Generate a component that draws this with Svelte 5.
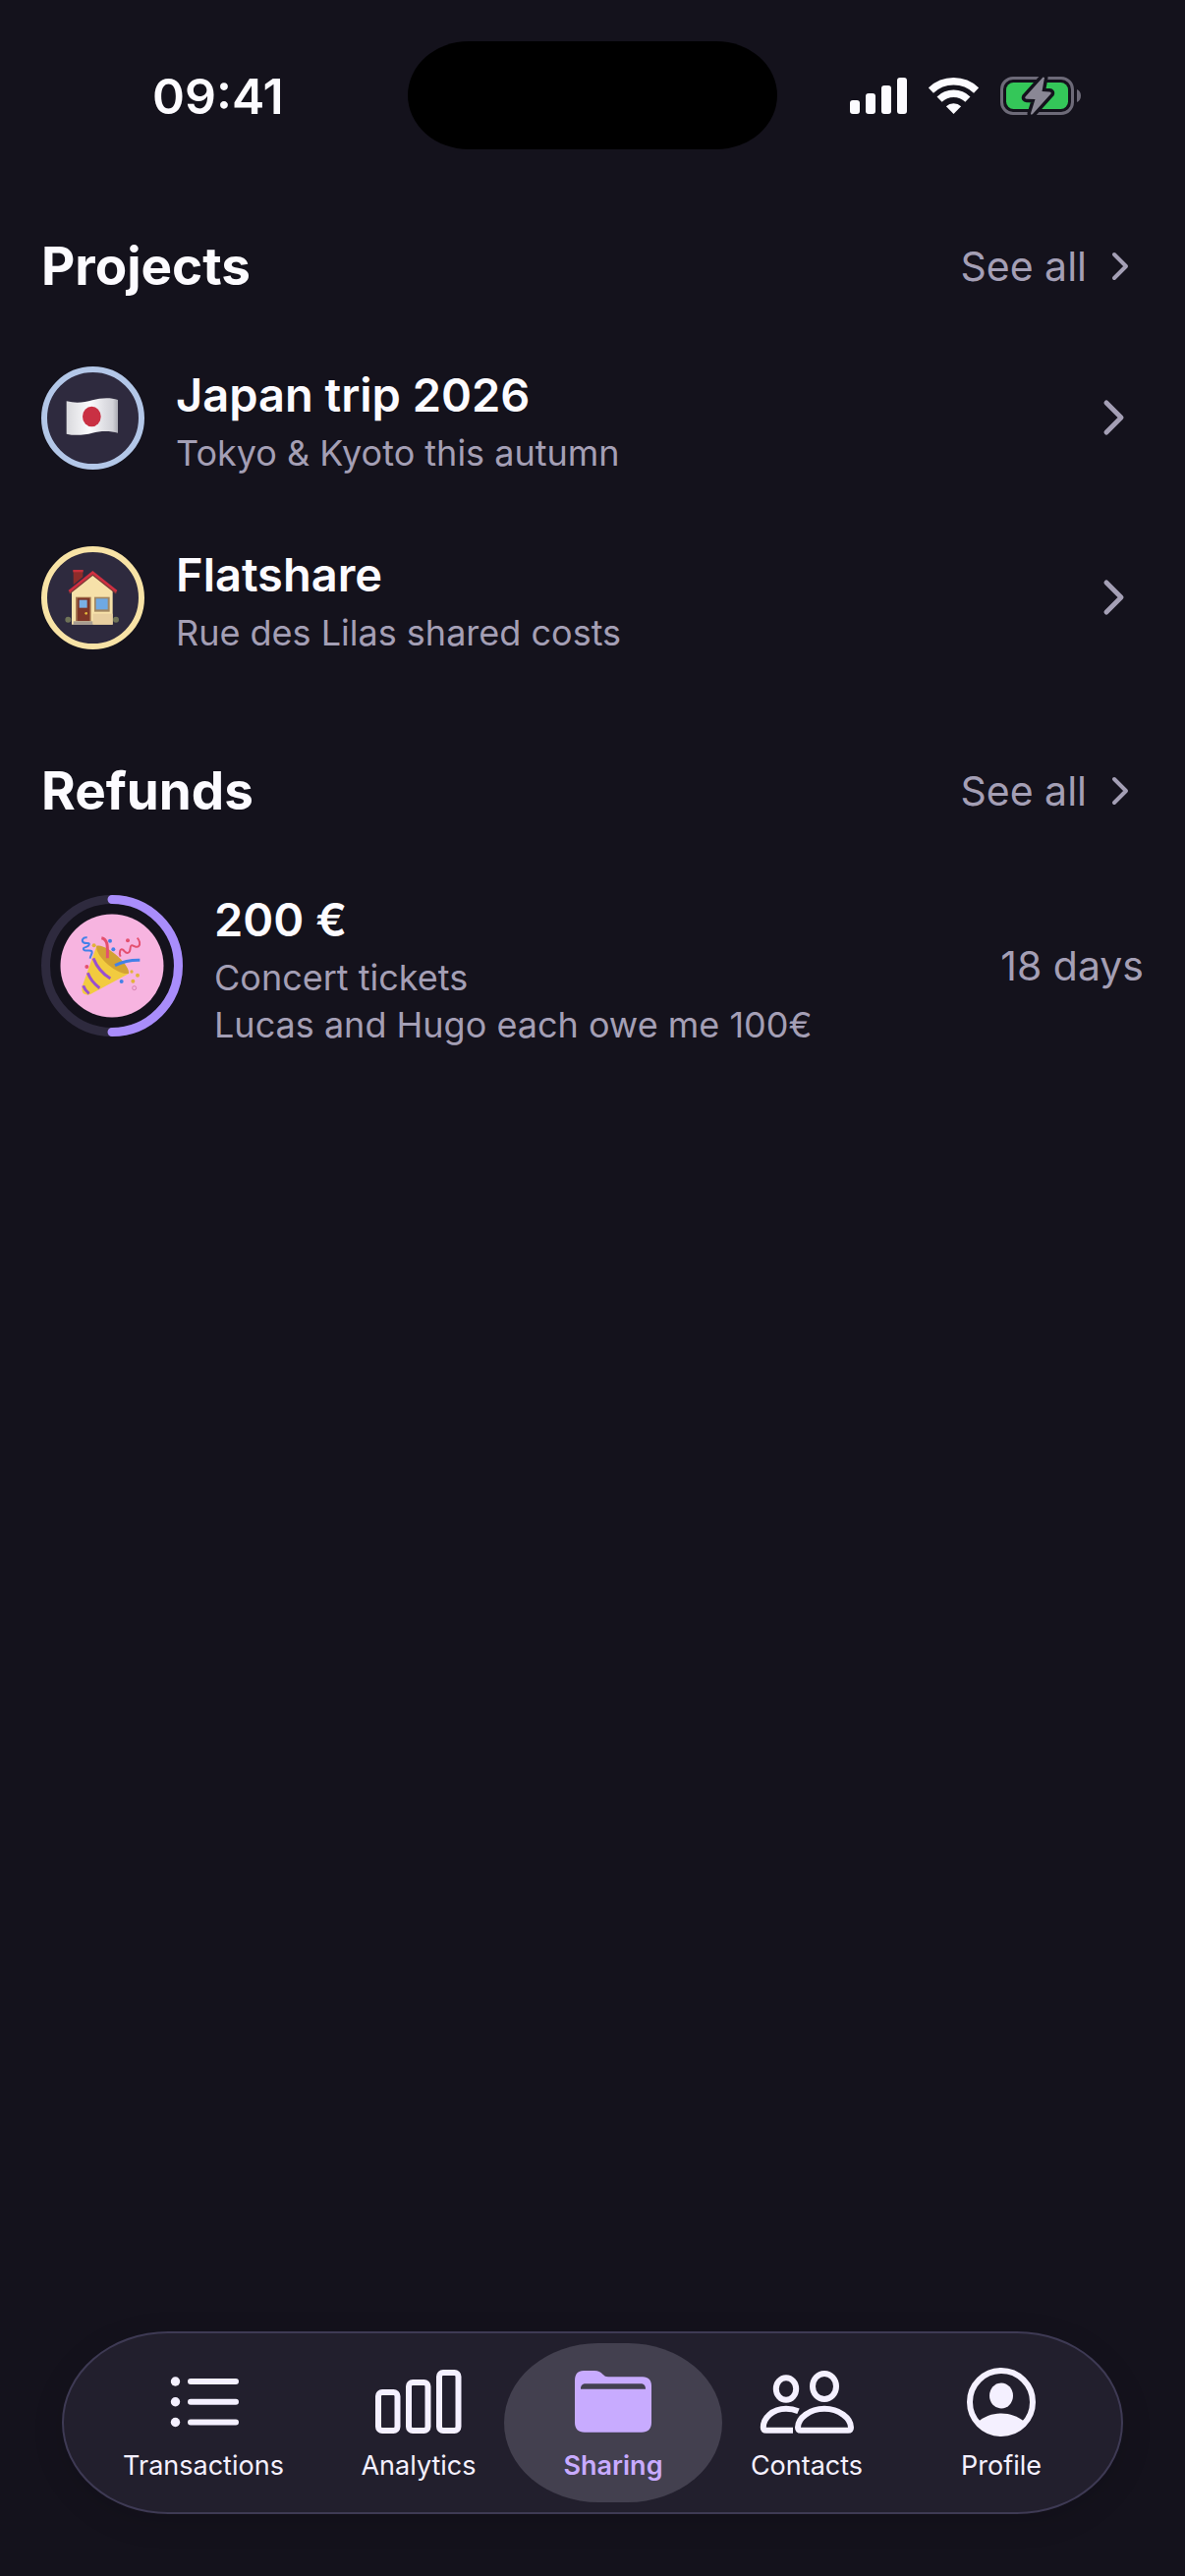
<script lang="ts">
  type Project = {
    name: string;
    note: string;
    icon: "flag" | "house";
    color: string;
  };

  type Refund = {
    amount: string;
    title: string;
    detail: string;
    due: string;
    progress: number;
  };

  const projects: Project[] = [
    { name: "Japan trip 2026", note: "Tokyo & Kyoto this autumn", icon: "flag", color: "#b3c7e8" },
    { name: "Flatshare", note: "Rue des Lilas shared costs", icon: "house", color: "#f8e3a6" },
  ];

  const refunds: Refund[] = [
    {
      amount: "200 €",
      title: "Concert tickets",
      detail: "Lucas and Hugo each owe me 100€",
      due: "18 days",
      progress: 50,
    },
  ];

  const tabs = [
    { id: "transactions", label: "Transactions", grow: 264 },
    { id: "analytics", label: "Analytics", grow: 174 },
    { id: "sharing", label: "Sharing", grow: 222 },
    { id: "contacts", label: "Contacts", grow: 172 },
    { id: "profile", label: "Profile", grow: 224 },
  ];

  let activeTab = $state("sharing");
</script>

{#snippet header(title: string)}
  <header class="section-header">
    <h2>{title}</h2>
    <a class="see-all" href="#{title.toLowerCase()}">
      See all
      <svg width="48" height="48" viewBox="0 0 48 48" aria-hidden="true">
        <path d="M18 12l12 12-12 12" />
      </svg>
    </a>
  </header>
{/snippet}

<div class="screen">
  <div class="status-bar">
    <span class="time">09:41</span>
    <div class="island"></div>
    <div class="status-icons">
      <svg width="58" height="38" viewBox="0 0 58 38" fill="#fcfbff" aria-label="Signal">
        <rect x="0" y="24" width="10" height="14" rx="3" />
        <rect x="16" y="17" width="10" height="21" rx="3" />
        <rect x="32" y="9" width="10" height="29" rx="3" />
        <rect x="48" y="1" width="10" height="37" rx="3" />
      </svg>
      <svg width="51" height="38" viewBox="0 0 51 38" aria-label="Wi-Fi">
        <g fill="none" stroke="#fcfbff" stroke-width="7.4">
          <path d="M2.4 14.100a33.3 33.3 0 0 1 46.2 0" />
          <path d="M11.1 23.100a20.7 20.7 0 0 1 28.8 0" />
        </g>
        <path d="M25.5 38l-7.6-7.7a11 11 0 0 1 15.2 0z" fill="#fcfbff" />
      </svg>
      <svg width="82" height="42" viewBox="0 0 82 42" aria-label="Battery charging">
        <rect x="1.5" y="3.5" width="72" height="36" rx="11.5" fill="none" stroke="#6d6a78" stroke-width="3" />
        <rect x="6" y="8" width="63" height="27" rx="7.5" fill="#34c759" />
        <path d="M78 15c2.600 1 4 3.200 4 6.500s-1.400 5.500-4 6.500z" fill="#6d6a78" />
        <path
          class="bolt-gap"
          d="M43.500 2.500L25.500 22.500q-1 2 1.500 2.200l8.500.3-4.500 14.500q0 2 2 .5L51.500 19.500q.8-1.800-1.500-2l-7.500-.5 2.500-14z"
        />
        <path
          d="M43.500 2.500L25.500 22.500q-1 2 1.500 2.200l8.500.3-4.500 14.500q0 2 2 .5L51.500 19.500q.8-1.800-1.500-2l-7.500-.5 2.500-14z"
          fill="#8a8795"
        />
      </svg>
    </div>
  </div>

  <main>
    <section>
      {@render header("Projects")}
      <ul>
        {#each projects as project (project.name)}
          <li>
            <button class="row" type="button">
              <span class="avatar" style="border-color: {project.color}">
                {#if project.icon === "flag"}
                  <svg width="60" height="60" viewBox="73 76 180 180" aria-hidden="true">
                    <defs>
                      <linearGradient id="cloth">
                        <stop offset="0" stop-color="#d9d9dd" />
                        <stop offset="0.450" stop-color="#fbfbfd" />
                        <stop offset="0.750" stop-color="#dedee3" />
                        <stop offset="0.900" stop-color="#d2d2d8" />
                        <stop offset="1" stop-color="#aaaab2" />
                      </linearGradient>
                    </defs>
                    <path
                      d="M81 116c29 7 54 4 79-3s55-9 78-1v101c-23-7-53-7-78 0s-55 9-79 3z"
                      fill="url(#cloth)"
                    />
                    <ellipse cx="158" cy="163" rx="28" ry="31" fill="#c93043" />
                  </svg>
                {:else}
                  <svg width="60" height="60" viewBox="73 115 180 180" aria-hidden="true">
                    <path d="M102 121h29v22l-29 24z" fill="#8d2c2a" />
                    <path d="M101 121h31v7h-31z" fill="#c62f3a" />
                    <circle cx="86" cy="273" r="9" fill="#6f7358" />
                    <circle cx="232" cy="273" r="9" fill="#6f7358" />
                    <path d="M97 184l63-50 62 50v104h-125z" fill="#f6e1a9" />
                    <path d="M162 255h60v33h-60z" fill="#e8cfa0" />
                    <path d="M90 192l71-57 72 57" fill="none" stroke="#7b3a35" stroke-width="6" />
                    <path d="M89 187l72-58 73 58" fill="none" stroke="#cf2f41" stroke-width="8" />
                    <path d="M109 204h47v74h-47z" fill="#a77b52" />
                    <path d="M114 207h38v70h-38z" fill="#7e3627" />
                    <path d="M120 213h24v24h-24z" fill="#79b0e4" />
                    <circle cx="141" cy="254" r="4" fill="#e5b93c" />
                    <path d="M166 204h47v45h-47z" fill="#a28761" />
                    <path d="M171 209h36v33h-36z" fill="#6fa9e3" />
                    <path d="M102 278h59v11h-59z" fill="#a79c91" />
                  </svg>
                {/if}
              </span>
              <span class="details">
                <span class="title">{project.name}</span>
                <span class="note">{project.note}</span>
              </span>
              <svg class="chevron" width="60" height="60" viewBox="0 0 60 60" aria-hidden="true">
                <path d="M22 15l15 15-15 15" />
              </svg>
            </button>
          </li>
        {/each}
      </ul>
    </section>

    <section>
      {@render header("Refunds")}
      <ul>
        {#each refunds as refund (refund.title)}
          <li>
            <button class="row" type="button">
              <svg class="ring" width="144" height="144" viewBox="0 0 144 144" aria-hidden="true">
                <circle class="track" cx="72" cy="72" r="67.500" />
                <circle
                  class="progress"
                  cx="72"
                  cy="72"
                  r="67.500"
                  pathLength="100"
                  stroke-dasharray="{refund.progress} 100"
                  transform="rotate(-90 72 72)"
                />
                <circle cx="72" cy="72" r="52.500" fill="#f7b4e0" />
                <svg x="38" y="38" width="68" height="68" viewBox="181 568 204 204">
                  <path
                    d="M236 609l-45 127q-3 22 18 23 4 0 8-2l117-63q-28-66-98-85z"
                    fill="#f2cb3f"
                  />
                  <path d="M236 609c-8 25 58 90 98 85 6-26-70-94-98-85z" fill="#d3a233" />
                  <path d="M226 647q16 40 52 62M209 692q10 27 36 46M195 731q5 14 18 24" class="stripe" />
                  <g class="streamers">
                    <path d="M207 584c-14-2-18 10-11 15s20-2 17 7-20 6-17 14 26-1 26 8-5 10-6 20" stroke="#4281e8" />
                    <path d="M251 585c22 4 18 32 18 62" stroke="#e4506f" stroke-width="9" />
                    <path d="M309 642c-6-14 0-26 7-21s8 13 17 9 3-20 9-22 15 9 22 3 3-19-4-26" stroke="#e4506f" />
                    <path d="M292 669q36-17 76-16" stroke="#4281e8" stroke-width="9" />
                  </g>
                  <g fill="#4281e8">
                    <circle cx="277" cy="594" r="6" />
                    <circle cx="287" cy="620" r="6" />
                    <circle cx="312" cy="718" r="6" />
                  </g>
                  <g fill="#e4506f">
                    <circle cx="206" cy="673" r="6" />
                    <circle cx="331" cy="593" r="6" />
                  </g>
                  <g fill="#e2b23a">
                    <circle cx="228" cy="608" r="6" />
                    <circle cx="343" cy="688" r="5" />
                    <circle cx="361" cy="699" r="6" />
                    <circle cx="347" cy="717" r="6" />
                  </g>
                  <circle cx="351" cy="738" r="6" fill="none" stroke="#d77fae" stroke-width="3" />
                </svg>
              </svg>
              <span class="details">
                <span class="title">{refund.amount}</span>
                <span class="note">{refund.title}</span>
                <span class="note">{refund.detail}</span>
              </span>
              <span class="due">{refund.due}</span>
            </button>
          </li>
        {/each}
      </ul>
    </section>
  </main>

  <nav>
    {#each tabs as tab (tab.id)}
      <button
        class="tab"
        class:active={activeTab === tab.id}
        type="button"
        style="flex-grow: {tab.grow}"
        onclick={() => (activeTab = tab.id)}
      >
        {#if tab.id === "transactions"}
          <svg width="72" height="80" viewBox="0 0 72 80" aria-hidden="true">
            <g fill="currentColor">
              <circle cx="7.500" cy="19" r="4.700" />
              <circle cx="7.500" cy="39.700" r="4.700" />
              <circle cx="7.500" cy="60.500" r="4.700" />
            </g>
            <path class="line" d="M23 19h46M23 39.700h46M23 60.500h46" />
          </svg>
        {:else if tab.id === "analytics"}
          <svg width="90" height="80" viewBox="0 0 90 80" aria-hidden="true">
            <rect class="line" x="4" y="30" width="19.500" height="39" rx="4" />
            <rect class="line" x="35" y="20" width="19.500" height="49" rx="4" />
            <rect class="line" x="66" y="10" width="19.500" height="59" rx="4" />
          </svg>
        {:else if tab.id === "sharing"}
          <svg width="78" height="80" viewBox="0 0 78 80" aria-hidden="true">
            <path
              fill="currentColor"
              fill-rule="evenodd"
              d="M9 8h11c4 0 6 1.200 8.500 3.800 1.800 1.700 2.800 2.500 5.500 2.500h35c6 0 9 3.500 9 9.500v37c0 6.500-3.500 10-10 10H10c-6.500 0-10-3.500-10-10V18C0 11.500 3 8 9 8zM11 21.300c-3 0-5 1.700-5 5.400h66c0-3.700-2-5.400-5-5.400z"
            />
          </svg>
        {:else if tab.id === "contacts"}
          <svg width="96" height="80" viewBox="0 0 96 80" aria-hidden="true">
            <g class="line">
              <ellipse cx="27" cy="26.500" rx="10.200" ry="11.300" />
              <ellipse cx="66" cy="24" rx="12" ry="13" />
              <path d="M66 46.800c15 0 27 9.500 27 19 0 2-1 3-3 3H42c-2 0-3-1-3-3 0-9.500 12-19 27-19z" />
              <path d="M39.500 49.300c-4-1.700-8-2.500-12.500-2.500-14 0-23.200 9.500-23.200 19 0 2 1 3 3 3H34" stroke-linecap="butt" />
            </g>
          </svg>
        {:else}
          <svg width="72" height="80" viewBox="0 0 72 80" aria-hidden="true">
            <circle class="line" cx="36" cy="40" r="32" />
            <ellipse cx="36" cy="33.500" rx="12" ry="13" fill="currentColor" />
            <path d="M13 59.500c6-5 14-8 23-8s17 3 23 8c-5 8.500-13 13-23 13s-18-4.500-23-13z" fill="currentColor" />
          </svg>
        {/if}
        <span>{tab.label}</span>
      </button>
    {/each}
  </nav>
</div>

<style>
  :global(body) {
    margin: 0;
    background: #14121c;
  }

  .screen {
    --text: #fcfbff;
    --muted: #a49fb5;
    --surface: #2e2a3e;
    display: flex;
    flex-direction: column;
    box-sizing: border-box;
    min-height: 100vh;
    background: #14121c;
    color: var(--text);
    font-family: Inter, "Noto Sans", sans-serif;
  }

  svg {
    display: block;
    flex: none;
  }

  button {
    margin: 0;
    padding: 0;
    border: none;
    background: none;
    color: inherit;
    font: inherit;
    cursor: pointer;
  }

  .status-bar {
    display: grid;
    grid-template-columns: 1fr 376px 1fr;
    align-items: center;
    padding-top: 42px;
  }

  .time {
    padding-top: 2px;
    padding-left: 155px;
    font-size: 50px;
    font-weight: 600;
    line-height: 60px;
  }

  .island {
    height: 110px;
    border-radius: 62px / 55px;
    background: #000;
  }

  .status-icons {
    display: flex;
    align-items: center;
    gap: 22px;
    padding-left: 74px;
  }

  .bolt-gap {
    fill: #14121c;
    stroke: #14121c;
    stroke-width: 7;
    stroke-linejoin: round;
  }

  main {
    display: flex;
    flex-direction: column;
    gap: 105px;
    padding: 87px 42px 0;
  }

  .section-header {
    display: flex;
    align-items: center;
    justify-content: space-between;
    margin-bottom: 62px;
  }

  h2 {
    margin: 0;
    font-size: 53px;
    font-weight: 700;
    line-height: 64px;
  }

  .see-all {
    display: flex;
    align-items: center;
    gap: 10px;
    color: var(--muted);
    font-size: 41px;
    line-height: 48px;
    text-decoration: none;
  }

  .see-all path,
  .chevron path {
    fill: none;
    stroke: var(--muted);
    stroke-width: 5;
    stroke-linecap: round;
    stroke-linejoin: round;
  }

  .see-all path {
    stroke-width: 4;
  }

  ul {
    display: flex;
    flex-direction: column;
    gap: 63px;
    margin: 0;
    padding: 0;
    list-style: none;
  }

  .row {
    display: flex;
    align-items: center;
    gap: 32px;
    width: 100%;
    text-align: left;
  }

  .avatar {
    display: flex;
    flex: none;
    align-items: center;
    justify-content: center;
    box-sizing: border-box;
    width: 105px;
    height: 105px;
    border: 6px solid;
    border-radius: 50%;
    background: var(--surface);
  }

  .ring circle.track,
  .ring circle.progress {
    fill: none;
    stroke: var(--surface);
    stroke-width: 9;
  }

  .ring circle.progress {
    stroke: #a98dfb;
    stroke-linecap: round;
  }

  .stripe {
    fill: none;
    stroke: #9a4fd0;
    stroke-width: 9;
  }

  .streamers {
    fill: none;
    stroke-width: 6;
  }

  .details {
    display: flex;
    flex: 1;
    flex-direction: column;
    padding-top: 7px;
  }

  .title {
    margin-bottom: 5px;
    font-size: 47px;
    font-weight: 600;
    line-height: 60px;
  }

  .note {
    color: var(--muted);
    font-size: 36px;
    line-height: 48px;
  }

  .due {
    color: var(--muted);
    font-size: 41px;
    line-height: 48px;
  }

  nav {
    display: flex;
    box-sizing: border-box;
    margin: auto 63px 63px;
    padding: 10px;
    border: 2px solid #3e3a54;
    border-radius: 108px / 93px;
    background: #221f2d;
    box-shadow: 0 8px 32px rgba(0, 0, 0, 0.12);
  }

  .tab {
    display: flex;
    flex-basis: 0;
    flex-direction: column;
    align-items: center;
    gap: 8px;
    padding: 20px 0;
    border-radius: 96px / 81px;
    color: #f4f0ff;
    font-size: 27px;
    line-height: 34px;
  }

  .tab.active {
    background: #43404f;
    color: #c8abff;
    font-weight: 600;
  }

  .line {
    fill: none;
    stroke: currentColor;
    stroke-width: 6;
    stroke-linecap: round;
    stroke-linejoin: round;
  }
</style>
